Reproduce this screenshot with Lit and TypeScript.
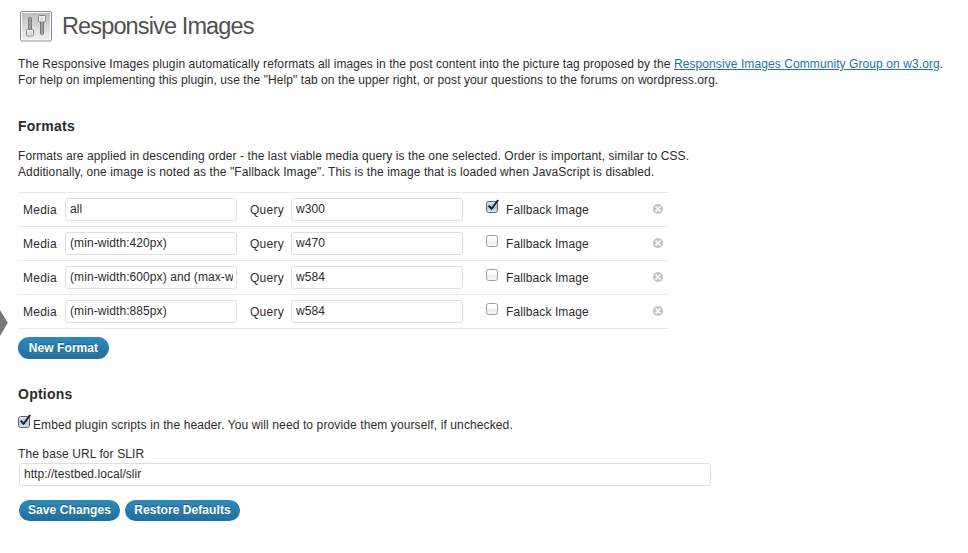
import { LitElement, html, css, svg } from "lit";
import { customElement, property } from "lit/decorators.js";

interface Format {
  media: string;
  query: string;
  fallback: boolean;
}

const FORMATS: Format[] = [
  { media: "all", query: "w300", fallback: true },
  { media: "(min-width:420px)", query: "w470", fallback: false },
  { media: "(min-width:600px) and (max-w", query: "w584", fallback: false },
  { media: "(min-width:885px)", query: "w584", fallback: false },
];

@customElement("check-box")
export class CheckBox extends LitElement {
  @property({ type: Boolean }) checked = false;

  static styles = css`
    :host { display: block; width: 14px; height: 15px; }
    svg { display: block; }
  `;

  render() {
    return html`<svg width="14" height="15" viewBox="0 0 14 15">
      <defs>
        <linearGradient id="off" x1="0" y1="0" x2="0" y2="1">
          <stop offset="0" stop-color="#fff" /><stop offset=".45" stop-color="#fcfcfc" />
          <stop offset=".5" stop-color="#ededed" /><stop offset="1" stop-color="#f6f6f6" />
        </linearGradient>
        <linearGradient id="on" x1="0" y1="0" x2="0" y2="1">
          <stop offset="0" stop-color="#e2e8ef" /><stop offset=".5" stop-color="#b9c6d6" />
          <stop offset="1" stop-color="#dbe6f0" />
        </linearGradient>
      </defs>
      <rect x=".5" y="2.5" width="11" height="11" rx="2.2"
        fill=${this.checked ? "url(#on)" : "url(#off)"}
        stroke=${this.checked ? "#5b6478" : "#9c9c9c"} />
      ${this.checked
        ? svg`<path d="M2.7 6.6L5.6 9.8L12.2 1" fill="none" stroke="#161c28" stroke-width="2" />`
        : ""}
    </svg>`;
  }
}

@customElement("format-row")
export class FormatRow extends LitElement {
  @property({ attribute: false }) format!: Format;

  static styles = css`
    :host {
      display: grid;
      grid-template-columns: 42px 172px 54px 172px 23px 20px 1fr 16px;
      align-items: start;
      box-sizing: border-box;
      height: 34px;
      padding-left: 5px;
      border-bottom: 1px solid #e9e9e9;
      font-size: 12px;
      line-height: 16px;
      color: #2c2c2c;
    }
    .label { padding-top: 9px; letter-spacing: 0.24px; }
    .query { padding-left: 13px; }
    .fallback { letter-spacing: 0.1px; }
    .field {
      box-sizing: border-box;
      height: 23px;
      margin-top: 5px;
      padding: 2px 3px 3px 4px;
      border: 1px solid #dfdfdf;
      border-radius: 3px;
      background: #fff;
    }
    .value { overflow: hidden; white-space: nowrap; letter-spacing: 0.08px; }
    check-box { grid-column: 6; margin-top: 6px; }
    .remove { display: block; margin-top: 10px; }
  `;

  render() {
    const f = this.format;
    return html`
      <div class="label">Media</div>
      <div class="field"><div class="value">${f.media}</div></div>
      <div class="label query">Query</div>
      <div class="field"><div class="value">${f.query}</div></div>
      <check-box ?checked=${f.fallback}></check-box>
      <div class="label fallback">Fallback Image</div>
      <svg class="remove" width="12" height="12" viewBox="0 0 12 12">
        <circle cx="6" cy="6" r="5.1" fill="#c3c3c3" />
        <path d="M3.5 3.5L8.5 8.5M8.5 3.5L3.5 8.5" stroke="#fff" stroke-width="1.6" />
      </svg>
    `;
  }
}

@customElement("app-root")
export class AppRoot extends LitElement {
  static styles = css`
    :host {
      display: block;
      position: relative;
      box-sizing: border-box;
      height: 553px;
      padding: 10px 0 0 18px;
      overflow: hidden;
      background: #fff;
      color: #2c2c2c;
      font: 12px/16px "Liberation Sans", Arial, sans-serif;
    }
    .menu-arrow { position: absolute; left: 0; top: 310px; }
    header { display: flex; height: 46px; }
    .icon { display: block; margin-left: 1px; }
    h1 {
      margin: 2px 0 0 9px;
      font-size: 23.5px;
      font-weight: 400;
      line-height: 28px;
      letter-spacing: -0.87px;
      color: #505050;
    }
    p { margin: 0; white-space: nowrap; }
    a { color: #21759b; text-decoration: underline; }
    h2 { margin: 0; font-size: 14px; line-height: 18px; font-weight: 700; letter-spacing: 0.25px; }
    .intro-1 { letter-spacing: 0.085px; }
    .intro-2 { letter-spacing: 0.077px; }
    .formats-1 { letter-spacing: 0.08px; }
    .formats-2 { letter-spacing: 0.1px; }
    .formats-title { margin-top: 29px; }
    .formats-1 { margin-top: 13px; }
    .rows { width: 650px; margin-top: 12px; border-top: 1px solid #e9e9e9; }
    .button {
      box-sizing: border-box;
      display: block;
      height: 21px;
      padding: 0;
      border: 1px solid;
      border-color: #2b89b6 #257ca6 #21759b;
      border-radius: 11px;
      background: linear-gradient(#2b8abb, #246f99);
      color: #fff;
      font: 700 12px/19px "Liberation Sans", Arial, sans-serif;
      letter-spacing: 0.07px;
      text-align: center;
      text-shadow: 0 -1px 0 rgba(0, 0, 0, 0.3);
    }
    .new { width: 91px; height: 22px; margin-top: 8px; line-height: 20px; }
    .options-title { margin-top: 26px; }
    .embed { display: flex; margin-top: 11px; height: 18px; }
    .embed span { margin: 3px 0 0 1px; letter-spacing: 0.115px; }
    .url-label { margin-top: 14px; letter-spacing: 0.09px; }
    .url {
      box-sizing: border-box;
      width: 692px;
      height: 23px;
      margin: 1px 0 0 1px;
      padding: 2px 4px;
      border: 1px solid #dfdfdf;
      border-radius: 3px;
      letter-spacing: 0.05px;
    }
    .actions { display: flex; gap: 5px; margin: 14px 0 0 1px; }
    .save { width: 101px; }
    .restore { width: 115px; }
  `;

  render() {
    return html`
      <svg class="menu-arrow" width="8" height="26" viewBox="0 0 8 26">
        <path d="M0 0L7.8 12.8L0 26Z" fill="#777" />
      </svg>
      <header>
        <svg class="icon" width="34" height="33" viewBox="0 0 34 33">
          <defs>
            <linearGradient id="panel" x1="0" y1="0" x2="0" y2="1">
              <stop offset="0" stop-color="#bdbdbd" /><stop offset="1" stop-color="#f0f0f0" />
            </linearGradient>
          </defs>
          <rect x="1.5" y="1.5" width="31" height="29.5" rx="1.5" fill="#fff" stroke="#8c8c8c" />
          <rect x="3" y="3" width="28" height="26.5" fill="url(#panel)" />
          <rect x="9.5" y="7.5" width="3" height="13" rx="1" fill="#a0a0a0" stroke="#777" />
          <rect x="21.5" y="9.5" width="3" height="15" rx="1" fill="#a0a0a0" stroke="#777" />
          <rect x="7.5" y="19.5" width="7" height="6.5" rx="1" fill="#f5f5f5" stroke="#858585" />
          <rect x="19.5" y="5.5" width="7" height="6.5" rx="1" fill="#f5f5f5" stroke="#858585" />
          <path d="M9 22h4M9 24h4M21 8h4M21 10h4" stroke="#b5b5b5" stroke-width=".8" />
        </svg>
        <h1>Responsive Images</h1>
      </header>
      <p class="intro-1">The Responsive Images plugin automatically reformats all images in the post content into the picture tag proposed by the <a>Responsive Images Community Group on w3.org</a>.</p>
      <p class="intro-2">For help on implementing this plugin, use the "Help" tab on the upper right, or post your questions to the forums on wordpress.org.</p>
      <h2 class="formats-title">Formats</h2>
      <p class="formats-1">Formats are applied in descending order - the last viable media query is the one selected. Order is important, similar to CSS.</p>
      <p class="formats-2">Additionally, one image is noted as the "Fallback Image". This is the image that is loaded when JavaScript is disabled.</p>
      <div class="rows">
        ${FORMATS.map((f) => html`<format-row .format=${f}></format-row>`)}
      </div>
      <button class="button new">New Format</button>
      <h2 class="options-title">Options</h2>
      <div class="embed">
        <check-box checked></check-box>
        <span>Embed plugin scripts in the header. You will need to provide them yourself, if unchecked.</span>
      </div>
      <p class="url-label">The base URL for SLIR</p>
      <div class="url">http://testbed.local/slir</div>
      <div class="actions">
        <button class="button save">Save Changes</button>
        <button class="button restore">Restore Defaults</button>
      </div>
    `;
  }
}
